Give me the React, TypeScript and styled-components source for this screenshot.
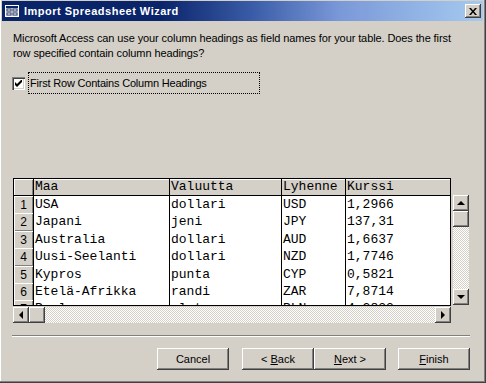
import { createGlobalStyle, styled } from 'styled-components';

// =============================================================================
// Data
// =============================================================================

const COLUMNS = ['Maa', 'Valuutta', 'Lyhenne', 'Kurssi'];

const ROWS = [
  ['USA', 'dollari', 'USD', '1,2966'],
  ['Japani', 'jeni', 'JPY', '137,31'],
  ['Australia', 'dollari', 'AUD', '1,6637'],
  ['Uusi-Seelanti', 'dollari', 'NZD', '1,7746'],
  ['Kypros', 'punta', 'CYP', '0,5821'],
  ['Etelä-Afrikka', 'randi', 'ZAR', '7,8714'],
  ['Puola', 'zloty', 'PLN', '4,2833'],
];

const FACE = '#d4d0c8';
const SHADOW = '#808080';
const DARK = '#404040';
const UI_FONT = '"Liberation Sans", Arial, sans-serif';
const GRID_COLS = '20px 136px 112px 64px 104px';

// =============================================================================
// Main Component
// =============================================================================

const Arrow = ({ dir }: { dir: 'up' | 'down' | 'left' | 'right' }) => {
  const points = {
    up: '4,1 0,5 8,5',
    down: '0,1 8,1 4,5',
    left: '5,0 5,8 1,4',
    right: '1,0 1,8 5,4',
  }[dir];
  const horiz = dir === 'left' || dir === 'right';
  return (
    <svg width={horiz ? 6 : 8} height={horiz ? 8 : 6} viewBox={horiz ? '0 0 6 8' : '0 0 8 6'}>
      <polygon points={points} fill="#000" />
    </svg>
  );
};

export default function App() {
  return (
    <>
      <GlobalStyle />
      <Window>
        <TitleBar>
          <TitleIcon width="16" height="16" viewBox="0 0 16 16">
            <rect x="1.5" y="2.5" width="13" height="11" fill={FACE} stroke="#fff" />
            <rect x="2" y="3" width="12" height="2" fill="#0a246a" />
            <rect x="3" y="6" width="4" height="2" fill="#fff" stroke="#0a246a" strokeWidth="0.8" />
            <rect x="9" y="6" width="4" height="2" fill="#fff" stroke="#0a246a" strokeWidth="0.8" />
            <rect x="3" y="10" width="4" height="2" fill="#fff" stroke="#0a246a" strokeWidth="0.8" />
            <rect x="9" y="10" width="4" height="2" fill="#fff" stroke="#0a246a" strokeWidth="0.8" />
          </TitleIcon>
          <TitleText>Import Spreadsheet Wizard</TitleText>
          <CloseButton>
            <svg width="8" height="7" viewBox="0 0 8 7">
              <path d="M0 0h2l2 2.5L6 0h2L5 3.5 8 7H6L4 4.5 2 7H0l3-3.5z" fill="#000" />
            </svg>
          </CloseButton>
        </TitleBar>
        <Body>
          <Description>
            Microsoft Access can use your column headings as field names for your table. Does the first
            row specified contain column headings?
          </Description>
          <CheckRow>
            <CheckBox>
              <svg width="7" height="7" viewBox="0 0 7 7">
                <path d="M0 2v3l2 2 5-5V-1L2 4z" fill="#000" />
              </svg>
            </CheckBox>
            <FocusLabel>First Row Contains Column Headings</FocusLabel>
          </CheckRow>
          <Preview>
            <PreviewMain>
              <Grid>
                <HeaderRow>
                  <CornerCell />
                  {COLUMNS.map((c) => (
                    <HeaderCell key={c}>{c}</HeaderCell>
                  ))}
                </HeaderRow>
                {ROWS.map((row, i) => (
                  <DataRow key={i}>
                    <SelectorCell>{i + 1}</SelectorCell>
                    {row.map((v, j) => (
                      <DataCell key={j}>{v}</DataCell>
                    ))}
                  </DataRow>
                ))}
              </Grid>
              <HScroll>
                <ScrollButton>
                  <Arrow dir="left" />
                </ScrollButton>
                <ScrollButton />
                <Track />
                <ScrollButton>
                  <Arrow dir="right" />
                </ScrollButton>
              </HScroll>
            </PreviewMain>
            <VScroll>
              <ScrollButton>
                <Arrow dir="up" />
              </ScrollButton>
              <ScrollButton />
              <Track />
              <ScrollButton>
                <Arrow dir="down" />
              </ScrollButton>
            </VScroll>
          </Preview>
          <Separator />
          <ButtonRow>
            <Button>Cancel</Button>
            <ButtonPair>
              <Button>
                &lt; <u>B</u>ack
              </Button>
              <Button>
                <u>N</u>ext &gt;
              </Button>
            </ButtonPair>
            <Button>
              <u>F</u>inish
            </Button>
          </ButtonRow>
        </Body>
      </Window>
    </>
  );
}

// =============================================================================
// Styled Components
// =============================================================================

const GlobalStyle = createGlobalStyle`
  html, body {
    margin: 0;
    padding: 0;
    background: ${FACE};
  }
`;

const raised = `
  background: ${FACE};
  box-shadow: inset -1px -1px ${DARK}, inset 1px 1px #fff, inset -2px -2px ${SHADOW};
`;

const Window = styled.div`
  width: 486px;
  height: 383px;
  box-sizing: border-box;
  padding: 1px 3px 3px 2px;
  display: flex;
  flex-direction: column;
  background: ${FACE};
  box-shadow: inset -1px -1px ${DARK}, inset -2px -2px ${SHADOW}, inset 1px 0 #fff;
  font-family: ${UI_FONT};
  font-size: 11px;
  color: #000;
`;

const TitleBar = styled.div`
  height: 20px;
  display: flex;
  align-items: center;
  padding: 0 2px 0 2px;
  background: linear-gradient(to right, #0a246a 0%, #0a246a 33%, #3a5ca8 52%, #7a98d8 70%, #a6caf0 100%);
`;

const TitleIcon = styled.svg`
  flex: none;
  margin-right: 4px;
`;

const TitleText = styled.span`
  flex: 1;
  color: #fff;
  font-weight: bold;
  font-size: 11px;
  letter-spacing: 0.5px;
  font-family: ${UI_FONT};
`;

const CloseButton = styled.div`
  width: 16px;
  height: 14px;
  display: flex;
  align-items: center;
  justify-content: center;
  ${raised}
`;

const Body = styled.div`
  flex: 1;
  display: flex;
  flex-direction: column;
  padding: 10px 13px 0 11px;
`;

const Description = styled.p`
  margin: 0;
  line-height: 15px;
  letter-spacing: -0.1px;
`;

const CheckRow = styled.div`
  display: flex;
  align-items: center;
  margin-top: 11px;
  margin-left: -1px;
  height: 22px;
`;

const CheckBox = styled.div`
  width: 13px;
  height: 13px;
  box-sizing: border-box;
  display: flex;
  align-items: center;
  justify-content: center;
  background: #fff;
  box-shadow: inset 1px 1px ${SHADOW}, inset 2px 2px ${DARK}, inset -1px -1px #fff, inset -2px -2px ${FACE};
  margin-right: 3px;
`;

const FocusLabel = styled.span`
  width: 232px;
  height: 22px;
  box-sizing: border-box;
  border: 1px dotted #000;
  display: flex;
  align-items: center;
  padding-left: 1px;
  letter-spacing: -0.2px;
`;

const Preview = styled.div`
  display: flex;
  gap: 2px;
  margin-top: 84px;
`;

const PreviewMain = styled.div`
  display: flex;
  flex-direction: column;
  gap: 1px;
`;

const Grid = styled.div`
  width: 438px;
  height: 128px;
  box-sizing: border-box;
  border: 1px solid #000;
  background: #fff;
  overflow: hidden;
  font-family: 'Liberation Mono', 'Courier New', monospace;
  font-size: 13px;
`;

const HeaderRow = styled.div`
  display: grid;
  grid-template-columns: ${GRID_COLS};
  height: 17px;
  box-sizing: border-box;
  border-bottom: 1px solid #000;
  background: ${FACE};
`;

const HeaderCell = styled.div`
  border-right: 1px solid #000;
  padding-left: 1px;
  line-height: 16px;
  box-shadow: inset 0 1px #fff;
  &:last-child {
    border-right: none;
  }
`;

const CornerCell = styled.div`
  border-right: 1px solid #000;
  box-shadow: inset 1px 1px #fff, inset -1px 0 ${SHADOW};
`;

const DataRow = styled.div`
  display: grid;
  grid-template-columns: ${GRID_COLS};
  height: 17.4px;
`;

const SelectorCell = styled.div`
  border-right: 1px solid #000;
  background: ${FACE};
  box-shadow: inset 1px 1px #fff, inset -1px -1px ${SHADOW};
  font-family: ${UI_FONT};
  font-size: 12px;
  text-align: right;
  padding-right: 6px;
  line-height: 18px;
`;

const DataCell = styled.div`
  border-right: 1px solid #000;
  padding-left: 1px;
  line-height: 17px;
  white-space: nowrap;
  &:last-child {
    border-right: none;
  }
`;

const HScroll = styled.div`
  display: flex;
  height: 16px;
`;

const VScroll = styled.div`
  display: flex;
  flex-direction: column;
  width: 16px;
  height: 110px;
  margin-top: 17px;
`;

const ScrollButton = styled.div`
  flex: none;
  width: 16px;
  height: 16px;
  display: flex;
  align-items: center;
  justify-content: center;
  ${raised}
`;

const Track = styled.div`
  flex: 1;
  background: repeating-conic-gradient(#fff 0 25%, ${FACE} 0 50%) 0 0 / 2px 2px;
`;

const Separator = styled.div`
  height: 0;
  margin-top: 12px;
  margin-left: -1px;
  border-top: 1px solid ${SHADOW};
  border-bottom: 1px solid #fff;
`;

const ButtonRow = styled.div`
  display: flex;
  justify-content: flex-end;
  gap: 12px;
  margin-top: 11px;
`;

const ButtonPair = styled.div`
  display: flex;
  margin-left: 1px;
`;

const Button = styled.button`
  width: 72px;
  height: 22px;
  border: none;
  padding: 0;
  font-family: ${UI_FONT};
  font-size: 11px;
  color: #000;
  ${raised}
`;
